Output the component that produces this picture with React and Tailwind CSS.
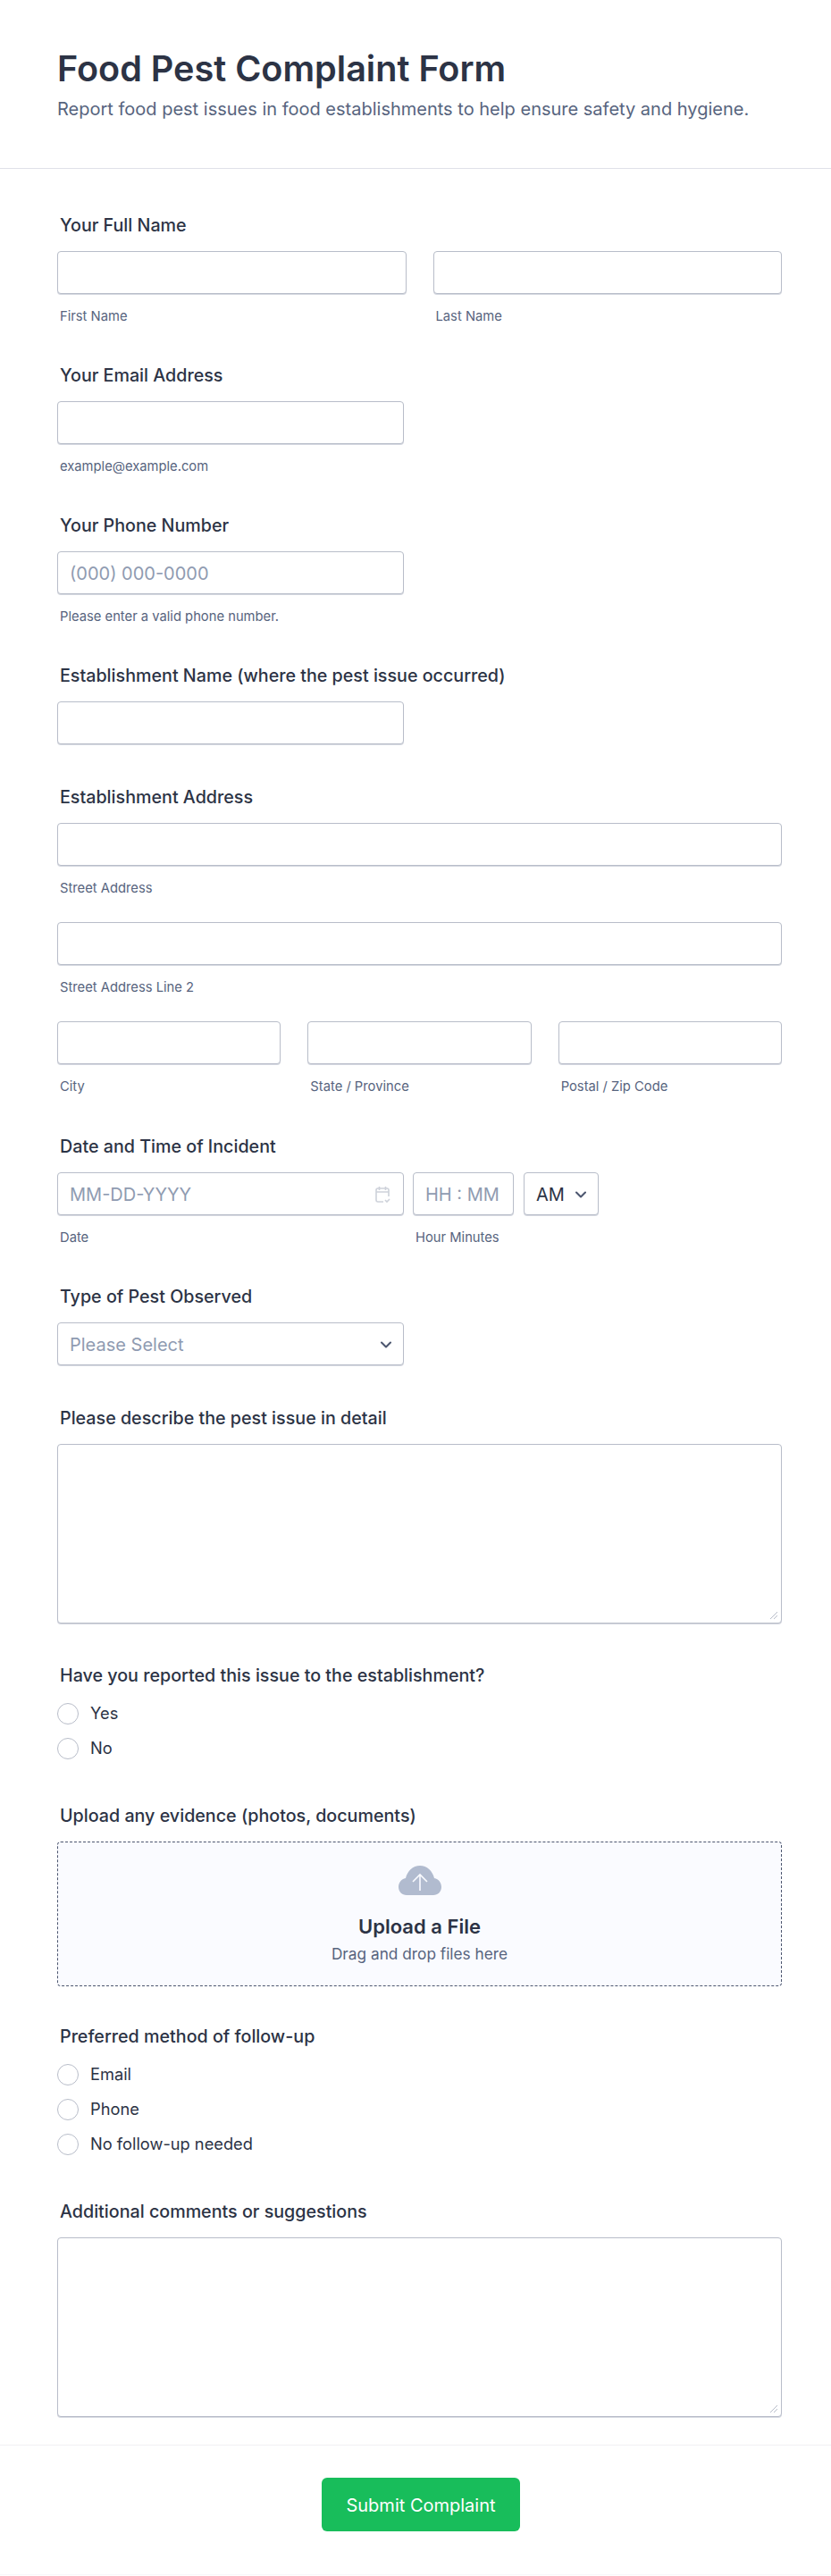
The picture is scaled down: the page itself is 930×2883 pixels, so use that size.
import { ChevronDown } from "lucide-react";

const inputClass =
  "h-12 rounded border border-[#b8bdc9] bg-white shadow-[0_1px_0_#d5d8e0]";

function Label({ children }) {
  return (
    <div className="mb-[16px] pt-[2px] pl-[3px] text-[19.7px] leading-[26px] font-medium text-[#2c3345]">
      {children}
    </div>
  );
}

function Sub({ children }) {
  return (
    <div className="mt-[16px] pl-[3px] text-[14.75px] leading-[18px] text-[#57647e]">
      {children}
    </div>
  );
}

function Field({ sub, className = "", children }) {
  return (
    <div className={className}>
      <div className={`${inputClass} w-full`}>{children}</div>
      {sub && <Sub>{sub}</Sub>}
    </div>
  );
}

function Placeholder({ children }) {
  return (
    <div className="flex h-full items-center px-[13px] pt-[2px] text-[20px] whitespace-nowrap text-[#8f9bb1]">
      {children}
    </div>
  );
}

function Radio({ label }) {
  return (
    <div className="flex h-6 items-center gap-[13px]">
      <span className="h-6 w-6 rounded-full border border-[#b8bdc9] bg-white" />
      <span className="text-[18.25px] text-[#2c3345]">{label}</span>
    </div>
  );
}

function TextArea() {
  return (
    <div className="relative h-[201px] w-full rounded border border-[#b8bdc9] bg-white shadow-[0_1px_0_#d5d8e0]">
      <svg className="absolute right-[3px] bottom-[3px]" width="10" height="10" viewBox="0 0 10 10">
        <path d="M1 9 L9 1 M5 9 L9 5" stroke="#b8bdc9" strokeWidth="1" fill="none" />
      </svg>
    </div>
  );
}

export default function App() {
  return (
    <div className="min-h-[2883px] bg-white font-['Inter',sans-serif]">
      <header className="h-[189px] border-b border-[#dfe1e8] px-[64px] pt-[51px]">
        <h1 className="text-[39.6px] leading-[52px] font-semibold text-[#2c3345]">
          Food Pest Complaint Form
        </h1>
        <p className="mt-[5px] text-[20px] leading-[28px] text-[#57647e]">
          Report food pest issues in food establishments to help ensure safety and hygiene.
        </p>
      </header>

      <main className="pt-[48px] pr-[55px] pl-[64px]">
        <section>
          <Label>Your Full Name</Label>
          <div className="grid grid-cols-2 gap-[30px]">
            <Field sub="First Name" />
            <Field sub="Last Name" />
          </div>
        </section>

        <section className="mt-[42px]">
          <Label>Your Email Address</Label>
          <Field sub="example@example.com" className="w-[388px]" />
        </section>

        <section className="mt-[42px]">
          <Label>Your Phone Number</Label>
          <Field sub="Please enter a valid phone number." className="w-[388px]">
            <Placeholder>(000) 000-0000</Placeholder>
          </Field>
        </section>

        <section className="mt-[42px]">
          <Label>Establishment Name (where the pest issue occurred)</Label>
          <Field className="w-[388px]" />
        </section>

        <section className="mt-[44px]">
          <Label>Establishment Address</Label>
          <Field sub="Street Address" />
          <Field sub="Street Address Line 2" className="mt-[29px]" />
          <div className="mt-[29px] grid grid-cols-3 gap-[30px]">
            <Field sub="City" />
            <Field sub="State / Province" />
            <Field sub="Postal / Zip Code" />
          </div>
        </section>

        <section className="mt-[43px]">
          <Label>Date and Time of Incident</Label>
          <div className="flex">
            <Field sub="Date" className="w-[388px] shrink-0">
              <div className="flex h-full items-center justify-between pt-[2px] pr-[14px] pl-[13px] text-[20px] text-[#8f9bb1]">
                <span>MM-DD-YYYY</span>
                <svg width="18" height="20" viewBox="0 0 18 20" fill="none" stroke="#ced2da" strokeWidth="1.6">
                  <path d="M16 12V5a2 2 0 0 0-2-2H4a2 2 0 0 0-2 2v11a2 2 0 0 0 2 2h6M2 7h14M5.500 1v4M12.500 1v4M12 16l2 2 3-3" />
                </svg>
              </div>
            </Field>
            <Field sub="Hour Minutes" className="ml-[10px] w-[113px] shrink-0">
              <Placeholder>HH : MM</Placeholder>
            </Field>
            <div className={`${inputClass} ml-[11px] flex w-[84px] shrink-0 items-center justify-between pt-[2px] pr-[9px] pl-[13px] text-[20px] text-[#2c3345]`}>
              <span>AM</span>
              <ChevronDown size={20} strokeWidth={2.5} className="text-[#4c566f]" />
            </div>
          </div>
        </section>

        <section className="mt-[42px]">
          <Label>Type of Pest Observed</Label>
          <div className={`${inputClass} flex w-[388px] items-center justify-between pt-[2px] pr-[9px] pl-[13px] text-[20px] text-[#8f9bb1]`}>
            <span>Please Select</span>
            <ChevronDown size={20} strokeWidth={2.5} className="text-[#4c566f]" />
          </div>
        </section>

        <section className="mt-[44px]">
          <Label>Please describe the pest issue in detail</Label>
          <TextArea />
        </section>

        <section className="mt-[43px]">
          <Label>Have you reported this issue to the establishment?</Label>
          <div className="mt-[18px] flex flex-col gap-[15px]">
            <Radio label="Yes" />
            <Radio label="No" />
          </div>
        </section>

        <section className="mt-[48px]">
          <Label>Upload any evidence (photos, documents)</Label>
          <div className="flex h-[162px] w-full flex-col items-center rounded border border-dashed border-[#4c566f] bg-[#fafbff] pt-[26px]">
            <svg width="48" height="33" viewBox="0 0 48 33">
              <path
                d="M9 33C4 33 0 29 0 24c0-5 3-9 8-10C10 6 16 0 24 0s14 6 16 14c5 1 8 5 8 10 0 5-4 9-9 9Z"
                fill="#b1bbcf"
              />
              <path d="M24 28V10M16 18l8-8 8 8" stroke="#fafbff" strokeWidth="1.600" fill="none" />
            </svg>
            <div className="mt-[20px] text-[22px] leading-[30px] font-semibold text-[#2c3345]">
              Upload a File
            </div>
            <div className="mt-[4px] text-[17.25px] leading-[24px] text-[#57647e]">
              Drag and drop files here
            </div>
          </div>
        </section>

        <section className="mt-[41px]">
          <Label>Preferred method of follow-up</Label>
          <div className="mt-[18px] flex flex-col gap-[15px]">
            <Radio label="Email" />
            <Radio label="Phone" />
            <Radio label="No follow-up needed" />
          </div>
        </section>

        <section className="mt-[48px]">
          <Label>Additional comments or suggestions</Label>
          <TextArea />
        </section>
      </main>

      <footer className="mt-[31px] flex h-[146px] justify-center border-y border-t-[#f0f0f3] border-b-[#f8f8fa] pt-[36px] pl-[12px]">
        <button
          type="button"
          className="h-[60px] w-[222px] rounded-[6px] bg-[#18bd5b] pt-[2px] text-[20px] font-normal text-white"
        >
          Submit Complaint
        </button>
      </footer>
    </div>
  );
}
